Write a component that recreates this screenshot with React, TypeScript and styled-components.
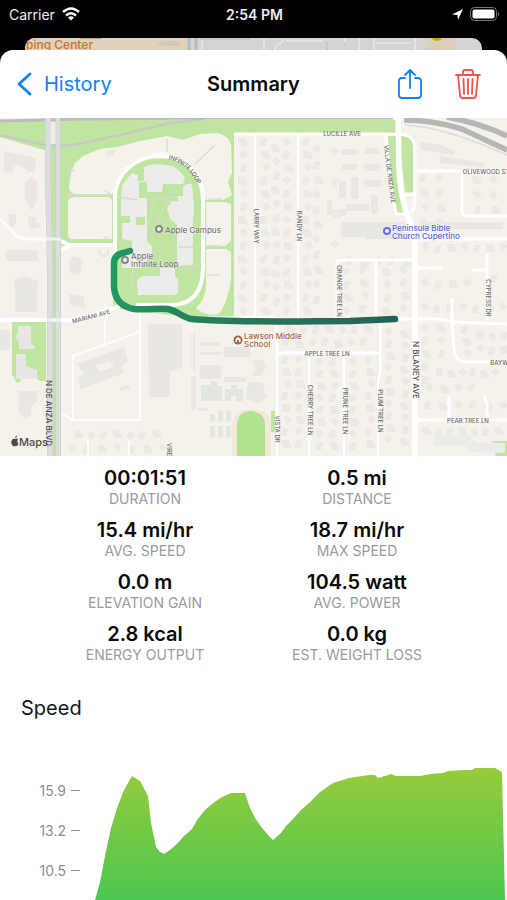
import React from 'react';
import styled, { createGlobalStyle } from 'styled-components';

const GlobalStyle = createGlobalStyle`
  * { box-sizing: border-box; }
  body {
    margin: 0;
    background: #000;
    font-family: Inter, "Liberation Sans", sans-serif;
    overflow-x: hidden;
  }
`;

const Screen = styled.div`
  display: flex;
  flex-direction: column;
`;

const StatusBar = styled.header`
  display: grid;
  grid-template-columns: 1fr auto 1fr;
  align-items: center;
  height: 28px;
  margin-bottom: 10px;
  padding: 0 7px 0 9px;
  color: #eee;
  font-size: 14px;
`;

const StatusGroup = styled.div<{ $end?: boolean }>`
  display: flex;
  align-items: center;
  justify-content: ${(p) => (p.$end ? 'flex-end' : 'flex-start')};
  gap: 7px;
`;

const Clock = styled.time`
  font-weight: 600;
  font-size: 14px;
`;

const PreviousCard = styled.div`
  height: 24px;
  margin: 0 25px -12px;
  border-radius: 10px 10px 0 0;
  overflow: hidden;
  background: #d5d4d2;
  svg { display: block; width: 100%; height: 24px; }
`;

const Sheet = styled.main`
  position: relative;
  background: #fff;
  border-radius: 13px 13px 0 0;
  overflow: hidden;
`;

const NavBar = styled.nav`
  display: grid;
  grid-template-columns: 1fr auto 1fr;
  align-items: center;
  height: 68px;
  padding: 0 17px;
`;

const NavButton = styled.button<{ $color: string }>`
  display: flex;
  align-items: center;
  gap: 12px;
  padding: 0;
  border: 0;
  background: none;
  color: ${(p) => p.$color};
  font: 400 20px/24px Inter, "Liberation Sans", sans-serif;
  cursor: pointer;
`;

const Title = styled.h1`
  margin: 0;
  color: #0a0a0a;
  font-size: 20px;
  line-height: 24px;
  font-weight: 600;
`;

const Actions = styled.div`
  display: flex;
  justify-content: flex-end;
  gap: 32px;
  padding-right: 9px;
`;

const MapView = styled.section`
  height: 338px;
  background: #f4f2eb;
  svg { display: block; width: 100%; height: 100%; }
`;

const StatGrid = styled.dl`
  display: grid;
  grid-template-columns: 1fr 1fr;
  row-gap: 10px;
  margin: 0;
  padding: 10px 44px 0 39px;
`;

const Stat = styled.div`
  display: flex;
  flex-direction: column-reverse;
  align-items: center;
`;

const StatName = styled.dt`
  color: #9a9a9c;
  font-size: 14px;
  line-height: 18px;
  text-transform: uppercase;
`;

const StatValue = styled.dd`
  margin: 0;
  color: #0a0a0a;
  font-size: 20px;
  line-height: 24px;
  font-weight: 600;
`;

const ChartTitle = styled.h2`
  margin: 30px 0 0;
  padding: 0 21px;
  color: #161616;
  font-size: 20px;
  line-height: 28px;
  font-weight: 400;
`;

const Chart = styled.section`
  display: grid;
  grid-template-columns: 80px 1fr;
  height: 178px;
`;

const Axis = styled.ol`
  display: flex;
  flex-direction: column;
  margin: 0;
  padding: 48px 0 0;
  list-style: none;
`;

const Tick = styled.li`
  display: flex;
  align-items: center;
  justify-content: flex-end;
  gap: 5px;
  height: 40px;
  color: #8e8e90;
  font-size: 14px;
  &::after {
    content: "";
    width: 9px;
    height: 1px;
    background: #8e8e90;
  }
`;

const Plot = styled.svg`
  display: block;
  width: 100%;
  height: 178px;
`;

const StreetName = styled.text<{ $major?: boolean }>`
  font: ${(p) => (p.$major ? '500 8px' : '500 6px')} Inter, sans-serif;
  fill: ${(p) => (p.$major ? '#4c4c4e' : '#68686b')};
  text-anchor: middle;
  dominant-baseline: central;
`;

const PlaceName = styled.text<{ $color: string }>`
  font: 500 8px Inter, sans-serif;
  fill: ${(p) => p.$color};
  stroke: #fff;
  stroke-width: 1px;
  stroke-opacity: 0.6;
  paint-order: stroke;
`;

/* Rows of houses: x, first y, last y, step */
const houseColumns: [number, number, number, number][] = [
  [243, 142, 312, 13], [265, 142, 312, 13], [276, 148, 312, 14], [287, 142, 312, 13],
  [307, 142, 312, 13], [317, 150, 312, 15], [335, 152, 250, 31],
  [347, 272, 312, 13], [364, 270, 312, 13], [387, 272, 312, 13], [404, 270, 312, 13],
  [286, 360, 450, 12], [299, 360, 450, 12], [320, 362, 450, 12], [334, 362, 450, 12],
  [353, 362, 450, 12], [370, 360, 450, 12], [389, 332, 450, 12], [405, 334, 450, 12],
  [425, 328, 385, 13], [441, 328, 365, 13], [424, 178, 225, 15], [440, 178, 225, 15],
  [477, 180, 210, 15], [494, 180, 210, 15], [466, 330, 358, 12],
];

/* Rows of houses: y, first x, last x, step */
const houseRows: [number, number, number, number][] = [
  [248, 425, 505, 13], [262, 350, 410, 14], [284, 425, 480, 14], [308, 424, 505, 13],
  [336, 480, 505, 12], [350, 480, 505, 12], [373, 440, 505, 11], [388, 430, 480, 14],
  [406, 428, 505, 15], [432, 426, 505, 12], [435, 78, 165, 13], [449, 72, 165, 15],
  [330, 290, 372, 13], [343, 286, 372, 13], [280, 494, 505, 12],
];

const footprints = ['M-4-4h7v3h2v5h-8v-3h-1z', 'M-3-4h6v4h-1v4h-6v-5h1z', 'M-4-2l5-3 4 5-5 4z'];

const houses = [
  ...houseColumns.flatMap(([x, from, to, step]) =>
    Array.from({ length: Math.floor((to - from) / step) + 1 }, (_, i) => ({
      x: x + ((i * 7) % 3) - 1, y: from + i * step, shape: (i * 5 + x) % 3,
    }))),
  ...houseRows.flatMap(([y, from, to, step]) =>
    Array.from({ length: Math.floor((to - from) / step) + 1 }, (_, i) => ({
      x: from + i * step, y: y + ((i * 5) % 3) - 1, shape: (i * 2 + y) % 3,
    }))),
];

const streets: { name: string; x: number; y: number; turn?: number; major?: boolean }[] = [
  { name: 'LUCILLE AVE', x: 342, y: 133 },
  { name: 'OLIVEWOOD ST', x: 486, y: 171 },
  { name: 'LARRY WAY', x: 256, y: 226, turn: 90 },
  { name: 'RANDY LN', x: 299, y: 226, turn: 90 },
  { name: 'ORANGE TREE LN', x: 339, y: 291, turn: 90 },
  { name: 'VILLA DE ANZA AVE', x: 390, y: 174, turn: 83 },
  { name: 'CYPRESS DR', x: 488, y: 298, turn: 90 },
  { name: 'MARIANI AVE', x: 91, y: 316, turn: -15 },
  { name: 'APPLE TREE LN', x: 327, y: 353 },
  { name: 'BAYWOOD', x: 506, y: 362 },
  { name: 'PEAR TREE LN', x: 468, y: 420 },
  { name: 'CHERRY TREE LN', x: 310, y: 410, turn: 90 },
  { name: 'PRUNE TREE LN', x: 345, y: 411, turn: 90 },
  { name: 'PLUM TREE LN', x: 380, y: 411, turn: 90 },
  { name: 'VISTA DR', x: 277, y: 429, turn: 90 },
  { name: 'VIREO', x: 169, y: 452, turn: 90 },
  { name: 'N DE ANZA BLVD', x: 49, y: 413, turn: 90, major: true },
  { name: 'N BLANEY AVE', x: 416, y: 370, turn: 90, major: true },
];

function RideMap() {
  return (
    <svg viewBox="0 118 507 338" preserveAspectRatio="xMidYMid slice" role="img" aria-label="Ride route map">
      <defs>
        <linearGradient id="route" gradientUnits="userSpaceOnUse" x1="114" y1="0" x2="395" y2="0">
          <stop offset="0" stopColor="#1f9a60" />
          <stop offset="0.3" stopColor="#26805a" />
          <stop offset="1" stopColor="#24625a" />
        </linearGradient>
        <path id="loopName" d="M167 156Q193 160 203 190" />
      </defs>

      {/* Parks and verges */}
      <g fill="#c0e5a1">
        <path d="M0 120H396V134H234V320L188 322V317L112 308V246H61V456H51V152L0 137Z" />
        <path d="M12 322H46V381H40L34 377H15L12 375Z" />
        <path d="M386 136H397L400 175L405 214H396L390 190Z" />
        <path d="M401 136Q413 136 413 146V193H405L402 165Z" />
        <path d="M271 411H275V432H271ZM492 441H507V456H496L494 450Z" />
      </g>
      <path d="M61 247H113V309L61 321Z" fill="#f4f2eb" />
      <path d="M14 372L19 382" stroke="#c0e5a1" strokeWidth="5" />

      {/* Campus lots */}
      <g fill="#f4f2eb">
        <path d="M69 188L71 172L75 163L83 156L100 149L117 147L140 141L167 136L183 140L200 134L218 133Q230 137 231 145L232 173L228 182L232 195L223 200H207L160 180L112 194H75Q70 193 69 188Z" />
        <path d="M74 197H109Q112 198 112 203V239H76Q68 240 68 235V203Q68 197 74 197Z" />
        <path d="M206 202H226L231 204V241L225 246H206Z" />
        <path d="M206 249H226L231 252V280Q228 302 219 314Q206 317 196 308Q204 301 206 288Z" />
      </g>
      <path d="M195 164L215 145M167 139V152M208 199H222M207 246H221M207 275H220M104 190L110 194M104 237L110 240M68 169L75 171M66 195H112" fill="none" stroke="#dcdcd6" strokeWidth="1.5" />
      <path d="M105 152L116 149L113 156L108 157Z" fill="#e8e7e4" />
      <path d="M115 293V197C116 170 139 155 160 155C190 156 203 176 203 201V267Q203 304 172 305H136Z" fill="#c0e5a1" />

      {/* Campus buildings */}
      <g fill="#ececeb">
        <path d="M144 167L150 165L158 164L172 166Q181 170 185 178L183 184H163L162 192H147V181H144Z" />
        <path d="M132 173L138 175V181L146 181V198H147V241L152 246V255L140 268H122V261L126 255L132 253V241L122 239V223H130V216H121V198L122 185Z" />
        <path d="M183 186L187 184H192L194 208L193 220V265L177 266V225L170 219L167 208L172 201H178V196H183Z" />
        <path d="M137 280L142 276H160V268H175V276L178 279V293L174 295H138Z" />
      </g>
      <path d="M139 182H146V198H139ZM136 217H145V225H136Z" fill="#c0e5a1" />
      <path d="M112 196L138 200M147 200L178 197M155 197L149 225M172 187L150 240M149 213L165 225M160 240V265M178 247H203M133 270L131 290M178 270L200 267M160 295V303" stroke="#d2ddc9" strokeWidth="1.4" fill="none" />

      {/* Large buildings */}
      <g fill="#e8e7e4">
        <path d="M4 151L36 158L35 172H28L22 166L13 165V173L4 172Z" />
        <path d="M31 176L37 182V200L32 211L25 200V182Z" />
        <path d="M28 217H36V222L41 225L36 228H29ZM8 214H16V223L10 228Z" />
        <path d="M6 250H38V261H6ZM14 279L26 276L38 281V289H14Z" />
        <path d="M69 261L74 256L83 260L80 275L70 273ZM15 288H37V312H15ZM0 330H10V350H0Z" />
        <path d="M18 326H31V343L35 347V349H19V341L15 337L18 333ZM16 354H26V366L37 370V379H16Z" />
        <path d="M19 391H37V402L31 407V414L26 420L19 413Z" />
        <path d="M69 294L84 296L85 308L70 305Z" />
        <path d="M77 364L124 347L128 362L121 366L124 373L81 389L78 380L84 373Z" />
        <path d="M119 388L128 385L130 389L120 391Z" />
        <path d="M148 324H182V368L170 371V397H149Z" />
        <path d="M190 333H195V371H190ZM200 342H221V346H200ZM224 347H251V357H224ZM200 365H221V379H200ZM224 377H246V382H224ZM191 376H196V410H191ZM200 352H221V355H200Z" />
        <path d="M252 361L263 359L266 368L260 376H252L256 369ZM248 382H262L267 397L257 404L246 398ZM198 408H208V411H198Z" />
        <path d="M341 149H357V155H341ZM365 148H379V154H365ZM342 164H357V170H342ZM364 164H380V171H364ZM339 181H346V198H339ZM351 177H358V199H351ZM364 180H381V187H364ZM339 209H346V216H339ZM346 204H369V211H346ZM371 195H378V214H371ZM327 200H332V215H327ZM341 222H405V237H341ZM420 222H503V229H420Z" />
        <path d="M420 142L440 145L455 151L454 155L421 150ZM440 156L484 163L483 167L440 163Z" />
      </g>
      <path d="M96 365L110 361L114 367L99 372Z" fill="#f4f2eb" />
      <path d="M366 234H405V239H366Z" fill="#e4e9da" />
      <g fill="#e1e6df">
        <path d="M201 385H211V381H217V386H222V401H201ZM225 389H231V385H237V389H243V401H236V396H231V401H225Z" />
        <path d="M210 414H215V421H210ZM218 411H223V421H218ZM226 411H231V421H226ZM210 426H215V437H210ZM218 426H223V437H218ZM226 426H231V437H226Z" />
      </g>
      <path d="M434 441L465 440L475 447L505 448" fill="none" stroke="#ebece9" strokeWidth="10" />

      {/* Houses */}
      <g fill="#eae9e5">
        {houses.map((h, i) => (
          <path key={i} d={footprints[h.shape]} transform={`translate(${h.x} ${h.y})`} />
        ))}
      </g>

      {/* Running track */}
      <path d="M232 456V425Q233 409 251 409Q271 409 271 425V456Z" fill="#f1eada" />
      <path d="M237 456V425Q238 411 251 411Q265 412 265 425V456Z" fill="#b2e28d" />

      {/* Minor paths */}
      <g fill="none" stroke="#fdfdfc" strokeWidth="2" strokeLinejoin="round">
        <path d="M73 420V356L95 348L140 332M140 313V420H73L61 413M105 321V343M105 303L107 320" />
        <path d="M0 219L12 231Q16 239 28 239H47" strokeWidth="3" />
        <path d="M88 440V456M129 440V456" />
        <path d="M192 328V374" strokeWidth="1" />
      </g>

      {/* Streets */}
      <g fill="none" stroke="#e9e8e5" strokeWidth="4" strokeLinejoin="round">
        <path d="M255 134V320M298 134V320M277 330V456M309 353V456M344 353V456M379 325V370L378 385V456" />
      </g>
      <g fill="none" stroke="#fff" strokeWidth="3" strokeLinejoin="round">
        <path d="M234 134H398M255 134V320M298 134V320M337 320V262Q338 260 342 260H414M376 260V320" />
        <path d="M277 326V456M277 353H380M309 353V456M344 353V456M380 325V370L378 385V456" />
        <path d="M386 134L390 180L396 214H406M400 134Q415 135 415 149V205L411 213M405 194H414" />
        <path d="M414 171H507M462 171V212Q463 216 468 216H507M415 239H507M415 268H443M472 270H487M487 254V320" />
        <path d="M395 319H440L455 322L507 324M452 298V321L454 350Q456 362 467 362H507" />
        <path d="M415 420H507M449 396V420M484 396L487 404V420" />
        <path d="M0 320H73L90 316L120 306M61 241L69 245H113M61 251L69 246" strokeWidth="4" />
        <path d="M188 318H277" />
        <path d="M115 293V197C116 170 139 156 160 156C190 157 203 176 203 201V267Q203 304 172 305H136" strokeWidth="4" />
        <path d="M398 118L399 170Q400 192 406 212Q415 231 415 243V456" strokeWidth="5.5" />
      </g>
      <path d="M100 250V254Q104 259 108 254V249" stroke="#d9d9d4" strokeWidth="1" fill="none" />

      {/* Freeway and boulevard */}
      <g fill="none">
        <path d="M0 135L50 146L73 145L125 134L170 123L205 119" stroke="#c5cac5" strokeWidth="2.6" />
        <path d="M0 121L80 119L210 118H393" stroke="#babcba" strokeWidth="3" />
        <path d="M404 120Q432 120 462 129L507 150" stroke="#b6b6b6" strokeWidth="5.5" />
        <path d="M447 117Q480 123 507 136" stroke="#b6b6b6" strokeWidth="5.5" />
        <path d="M405 125Q445 127 507 155" stroke="#dddcd9" strokeWidth="1.5" />
        <path d="M48 118V180L50 270V456" stroke="#c9cbd2" strokeWidth="6" />
        <path d="M48 118V180L50 270V456" stroke="#dcdde2" strokeWidth="5" />
        <path d="M58 118V456" stroke="#c9cbd2" strokeWidth="5" />
        <path d="M58 118V456" stroke="#dcdde2" strokeWidth="4" />
        <path d="M53 122V144" stroke="#f2efe7" strokeWidth="5" />
        <path d="M46 239H61M46 320H61" stroke="#f1f1f3" strokeWidth="3" />
      </g>

      <text fontFamily="Inter, sans-serif" fontSize="6" fontWeight="500" fill="#68686b" dy="3">
        <textPath href="#loopName" startOffset="2">INFINITE LOOP</textPath>
      </text>
      {streets.map((s) => (
        <StreetName key={s.name} $major={s.major} transform={`translate(${s.x} ${s.y}) rotate(${s.turn ?? 0})`}>
          {s.name}
        </StreetName>
      ))}

      <path
        d="M130 251L123 253Q114 255 114 263V287C115 300 122 307 134 309C147 310 158 308 168 309C178 311 183 318 192 319C235 323 310 321 350 321L395 319"
        fill="none" stroke="url(#route)" strokeWidth="6.5" strokeLinecap="round" strokeLinejoin="round"
      />

      {/* Places */}
      <g fill="#f4f2eb" strokeWidth="2">
        <circle cx="159" cy="229" r="3" stroke="#88898c" />
        <circle cx="125" cy="260" r="3" stroke="#88898c" />
        <circle cx="387" cy="231" r="3" stroke="#656eea" />
      </g>
      <circle cx="238" cy="340" r="4.5" fill="#ad6640" />
      <path d="M235.500 342V339L238 337L240.500 339V342H239V340H237V342Z" fill="#fff" />
      <PlaceName $color="#77777b" x="165" y="233">Apple Campus</PlaceName>
      <PlaceName $color="#77777b" x="131" y="259">Apple</PlaceName>
      <PlaceName $color="#77777b" x="131" y="267">Infinite Loop</PlaceName>
      <PlaceName $color="#5b66e8" x="392" y="231">Peninsula Bible</PlaceName>
      <PlaceName $color="#5b66e8" x="392" y="239">Church Cupertino</PlaceName>
      <PlaceName $color="#a8633f" x="244" y="339">Lawson Middle</PlaceName>
      <PlaceName $color="#a8633f" x="244" y="347">School</PlaceName>

      {/* Map provider */}
      <path d="M15 439Q13 438 12 440Q10 443 13 446Q14 447 15 446Q16 446 17 446Q18 445 18.500 443.500Q16.500 442 18 439.500Q17 438 15 439ZM15 438Q15 436 17 435.500Q17 437.500 15 438Z" fill="#4a4a4c" />
      <text x="19" y="446" fontFamily="Inter, sans-serif" fontSize="11" fontWeight="500" fill="#4a4a4c">Maps</text>
    </svg>
  );
}

function PreviousMap() {
  return (
    <svg viewBox="25 38 457 24" preserveAspectRatio="xMidYMid slice" aria-hidden="true">
      <path d="M25 38H188V62H25Z" fill="#dfd1bb" />
      <path d="M157 45L162 41H180V46H157Z" fill="#d3c9b7" />
      <path d="M80 38H101" stroke="#a66a4a" />
      <path d="M189 38V62M196 38V62" stroke="#b4bac0" strokeWidth="3" />
      <g fill="none" stroke="#e4e4e2" strokeWidth="2">
        <path d="M202 38V62M264 38V50M284 40L275 47V50M286 41H323M345 38V50M359 38V50M374 38V50M376 43H410M415 38V50" />
        <path d="M200 39H250" stroke="#c4c7ca" />
        <path d="M327 42V50M345 42V50" stroke="#bababa" strokeWidth="1" />
      </g>
      <path d="M428 38H456V62H428Z" fill="#dbcfb9" />
      <circle cx="437" cy="35" r="6" fill="#dba008" />
      <text x="26" y="49" fontFamily="Inter, sans-serif" fontSize="12" fontWeight="500" fill="#c9752d">ping Center</text>
    </svg>
  );
}

const stats = [
  ['Duration', '00:01:51'], ['Distance', '0.5 mi'],
  ['Avg. Speed', '15.4 mi/hr'], ['Max Speed', '18.7 mi/hr'],
  ['Elevation Gain', '0.0 m'], ['Avg. Power', '104.5 watt'],
  ['Energy Output', '2.8 kcal'], ['Est. Weight Loss', '0.0 kg'],
];

export default function App() {
  return (
    <>
      <GlobalStyle />
      <Screen>
        <StatusBar>
          <StatusGroup>
            <span>Carrier</span>
            <svg width="18" height="14" viewBox="0 0 18 14" fill="none" stroke="#fff" strokeWidth="2.500">
              <path d="M1 5Q9-2 17 5M4 8.500Q9 4 14 8.500" />
              <path d="M9 13.500L6 10.500Q9 8 12 10.500Z" fill="#fff" stroke="none" />
            </svg>
          </StatusGroup>
          <Clock>2:54 PM</Clock>
          <StatusGroup $end>
            <svg width="11" height="11" viewBox="0 0 11 11"><path d="M11 0L0 5.500L5.500 6L6 11Z" fill="#fff" /></svg>
            <svg width="30" height="14" viewBox="0 0 30 14">
              <rect x="0.500" y="0.500" width="26" height="13" rx="4" fill="none" stroke="#777" />
              <rect x="2.500" y="2.500" width="22" height="9" rx="2" fill="#fff" />
              <path d="M28 4.500Q30 7 28 9.500Z" fill="#888" />
            </svg>
          </StatusGroup>
        </StatusBar>

        <PreviousCard><PreviousMap /></PreviousCard>

        <Sheet>
          <NavBar>
            <NavButton type="button" $color="#1280fb">
              <svg width="15" height="24" viewBox="0 0 15 24" fill="none" stroke="currentColor" strokeWidth="2.800" strokeLinecap="round" strokeLinejoin="round">
                <path d="M13 2L2 12L13 22" />
              </svg>
              History
            </NavButton>
            <Title>Summary</Title>
            <Actions>
              <NavButton type="button" $color="#1280fb" aria-label="Share">
                <svg width="26" height="32" viewBox="0 0 26 32" fill="none" stroke="currentColor" strokeWidth="1.800" strokeLinecap="round" strokeLinejoin="round">
                  <path d="M8 10H5Q2 10 2 13V27Q2 30 5 30H21Q24 30 24 27V13Q24 10 21 10H18M13 20V2M8 7L13 2L18 7" />
                </svg>
              </NavButton>
              <NavButton type="button" $color="#f0524e" aria-label="Delete">
                <svg width="26" height="32" viewBox="0 0 26 32" fill="none" stroke="currentColor" strokeWidth="1.800" strokeLinecap="round" strokeLinejoin="round">
                  <path d="M1 7H25M8 7V4Q8 2 10 2H16Q18 2 18 4V7M3 7L5 27Q5 30 8 30H18Q21 30 21 27L23 7M8.500 11L9 26M13 11V26M17.500 11L17 26" />
                </svg>
              </NavButton>
            </Actions>
          </NavBar>

          <MapView><RideMap /></MapView>

          <StatGrid>
            {stats.map(([name, value]) => (
              <Stat key={name}>
                <StatName>{name}</StatName>
                <StatValue>{value}</StatValue>
              </Stat>
            ))}
          </StatGrid>

          <ChartTitle>Speed</ChartTitle>
          <Chart>
            <Axis>
              <Tick>15.9</Tick>
              <Tick>13.2</Tick>
              <Tick>10.5</Tick>
            </Axis>
            <Plot viewBox="80 722 427 178" preserveAspectRatio="none" role="img" aria-label="Speed over time">
              <defs>
                <linearGradient id="speed" gradientUnits="userSpaceOnUse" x1="0" y1="765" x2="0" y2="900">
                  <stop offset="0" stopColor="#99cb3b" />
                  <stop offset="1" stopColor="#4cc750" />
                </linearGradient>
              </defs>
              <path
                d="M95 900L100 882L106 851L111 828L117 808L124 790L132 776L140 781L148 796L151 823L156 847L160 852L164 854L170 850L178 843L183 837L192 829L197 820L204 811L213 803L222 797L231 793L245 793L250 808L255 818L262 828L269 836L273 840L281 833L286 826L293 819L301 810L309 803L320 792L333 783L349 778L369 775L375 775L378 778L385 776L391 774L396 776L420 776L430 774L443 773L448 771L465 770L472 770L475 768H495L502 772L505 900Z"
                fill="url(#speed)"
              />
            </Plot>
          </Chart>
        </Sheet>
      </Screen>
    </>
  );
}
